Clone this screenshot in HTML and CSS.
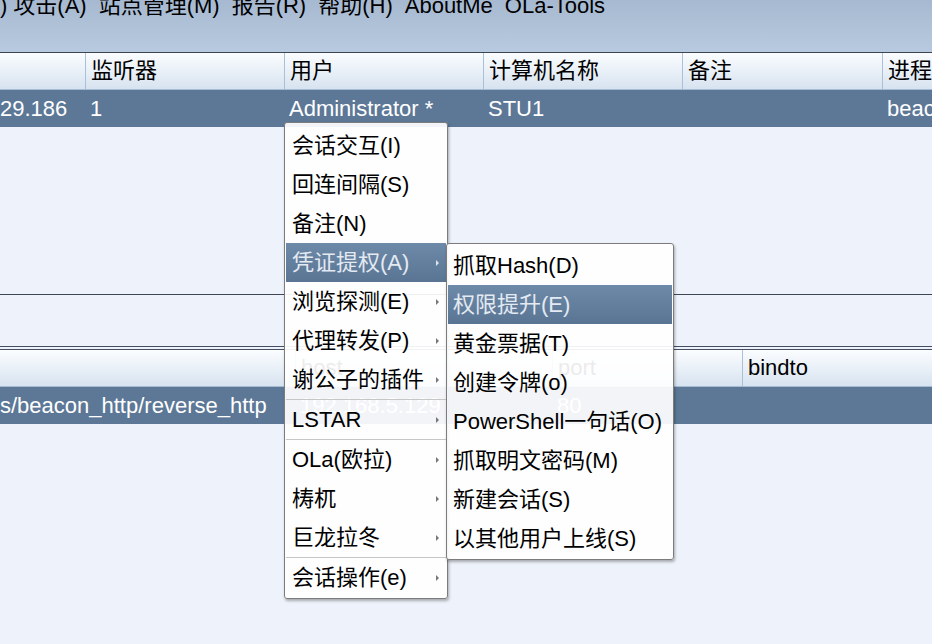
FILE: index.html
```html
<!DOCTYPE html>
<html lang="zh-CN">
<head>
    <meta charset="UTF-8">
    <meta name="viewport" content="width=device-width, initial-scale=1.0">
    <title>OLa-Tools</title>
    <link rel="stylesheet" href="styles.css">
</head>
<body>
    <div class="menubar">
        <div class="menubar-items">
            <span class="first">)</span>
            <span>攻击(A)</span>
            <span>站点管理(M)</span>
            <span>报告(R)</span>
            <span>帮助(H)</span>
            <span>AboutMe</span>
            <span>OLa-Tools</span>
        </div>
    </div>

    <!-- sessions table -->
    <div class="table sessions">
        <div class="thead">
            <div class="th"></div>
            <div class="th">监听器</div>
            <div class="th">用户</div>
            <div class="th">计算机名称</div>
            <div class="th">备注</div>
            <div class="th">进程</div>
        </div>
        <div class="trow selected">
            <div class="td first-cell">29.186</div>
            <div class="td">1</div>
            <div class="td">Administrator *</div>
            <div class="td">STU1</div>
            <div class="td"></div>
            <div class="td">beacon.exe</div>
        </div>
    </div>
    <div class="pane-space"></div>
    <div class="divider"></div>
    <div class="pane-gap"></div>
    <div class="split"></div>

    <!-- listeners table -->
    <div class="table listeners">
        <div class="thead">
            <div class="th"></div>
            <div class="th">host</div>
            <div class="th">port</div>
            <div class="th">bindto</div>
        </div>
        <div class="trow selected">
            <div class="td first-cell">s/beacon_http/reverse_http</div>
            <div class="td">192.168.5.129</div>
            <div class="td">80</div>
            <div class="td"></div>
        </div>
    </div>

    <!-- context menu -->
    <div class="popup main-menu">
        <div class="item">会话交互(I)</div>
        <div class="item">回连间隔(S)</div>
        <div class="item">备注(N)</div>
        <div class="item active">凭证提权(A)<i class="arrow"></i></div>
        <div class="item">浏览探测(E)<i class="arrow"></i></div>
        <div class="item">代理转发(P)<i class="arrow"></i></div>
        <div class="item">谢公子的插件<i class="arrow"></i></div>
        <div class="sep"></div>
        <div class="item">LSTAR<i class="arrow"></i></div>
        <div class="sep"></div>
        <div class="item">OLa(欧拉)<i class="arrow"></i></div>
        <div class="item">梼杌<i class="arrow"></i></div>
        <div class="item">巨龙拉冬<i class="arrow"></i></div>
        <div class="sep"></div>
        <div class="item">会话操作(e)<i class="arrow"></i></div>
    </div>

    <div class="popup sub-menu">
        <div class="item">抓取Hash(D)</div>
        <div class="item active">权限提升(E)</div>
        <div class="item">黄金票据(T)</div>
        <div class="item">创建令牌(o)</div>
        <div class="item">PowerShell一句话(O)</div>
        <div class="item">抓取明文密码(M)</div>
        <div class="item">新建会话(S)</div>
        <div class="item">以其他用户上线(S)</div>
    </div>
</body>
</html>
```

FILE: styles.css
```css
body {
    margin: 0;
    background: #eef2fa;
    font-family: "Liberation Sans", "Noto Sans CJK SC", sans-serif;
    font-size: 22px;
    color: #000;
    overflow: hidden;
    height: 644px;
}
.menubar {
    height: 52px;
    background: linear-gradient(#a6b9d0, #b8cadf);
    border-bottom: 1px solid #3d4452;
    overflow: hidden;
}
.menubar-items {
    display: flex;
    gap: 12px;
    line-height: 22px;
    margin-top: -5px;
    white-space: nowrap;
}
.menubar-items .first {
    margin-right: -6px;
}
.table .thead,
.table .trow {
    display: grid;
}
.sessions .thead,
.sessions .trow {
    grid-template-columns: 85px 199px 199px 199px 200px 1fr;
}
.listeners .thead,
.listeners .trow {
    grid-template-columns: 295px 257px 190px 1fr;
}
.thead {
    height: 36px;
    background: linear-gradient(#fbfdff, #d7e3f0);
    border-bottom: 1px solid #a5bcd5;
}
.th {
    line-height: 36px;
    padding-left: 5px;
    border-left: 1px solid #a9c0d8;
    white-space: nowrap;
    overflow: hidden;
}
.th:first-child {
    border-left: none;
}
.trow {
    height: 37px;
}
.trow.selected {
    background: #5d7897;
    color: #fff;
}
.td {
    line-height: 37px;
    padding-left: 5px;
    white-space: nowrap;
    overflow: hidden;
}
.td.first-cell {
    padding-left: 0;
}
.pane-space {
    height: 167px;
}
.divider {
    height: 1px;
    background: #3f4757;
}
.pane-gap {
    height: 51px;
}
.split {
    height: 2px;
    border-top: 1px solid #454e60;
    border-bottom: 1px solid #454e60;
}

/* popup menus */
.popup {
    position: absolute;
    box-sizing: border-box;
    background: rgba(255, 255, 255, 0.92);
    border: 1px solid #7c7c7c;
    border-radius: 3px;
    box-shadow: 1px 2px 3px rgba(0, 0, 0, 0.3);
    padding: 3px 1px 1px 1px;
}
.main-menu {
    left: 284px;
    top: 122px;
    width: 164px;
}
.sub-menu {
    left: 446px;
    top: 243px;
    width: 228px;
    padding-top: 2px;
}
.item {
    display: flex;
    align-items: center;
    justify-content: space-between;
    height: 39px;
    line-height: 39px;
    padding-left: 6px;
    padding-right: 7px;
    white-space: nowrap;
}
.sub-menu .item {
    padding-left: 5px;
}
.item.active {
    background: linear-gradient(#6e8aa9, #5a7594);
    color: #e4eaf2;
}
.arrow {
    width: 0;
    height: 0;
    border-left: 3px solid #777;
    border-top: 3px solid transparent;
    border-bottom: 3px solid transparent;
}
.item.active .arrow {
    border-left-color: #dde4ee;
}
.sep {
    height: 1px;
    background: #c6c6c6;
}
```
